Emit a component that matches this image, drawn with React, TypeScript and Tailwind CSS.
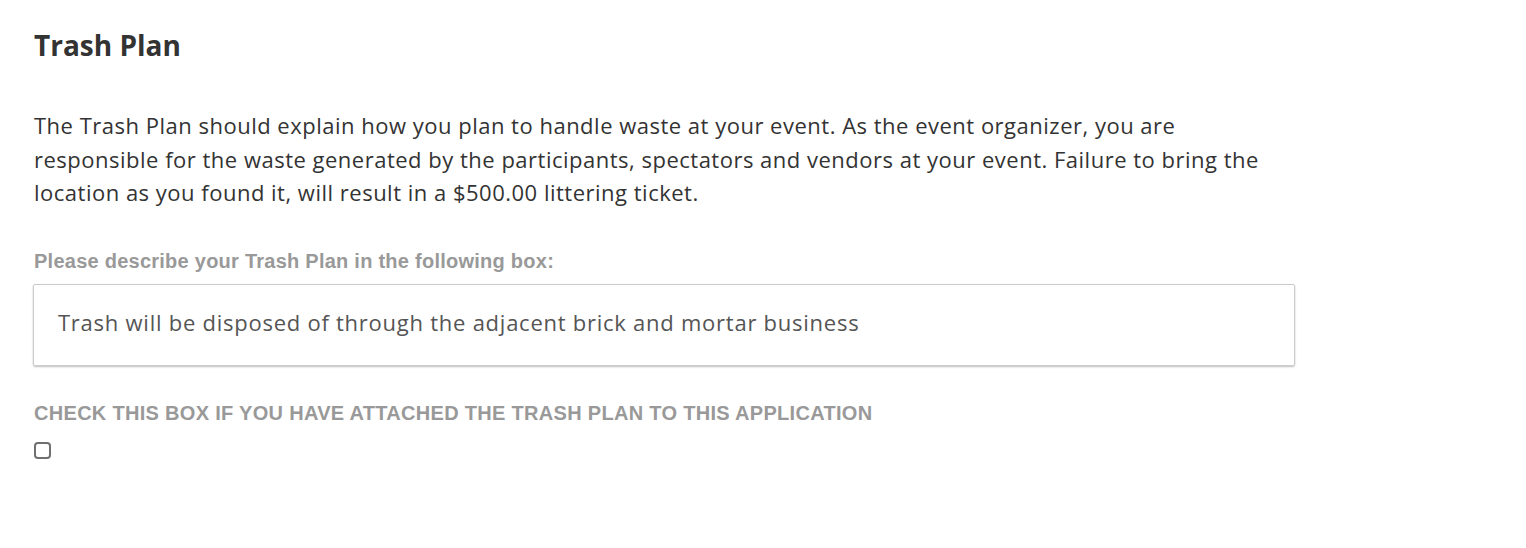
export default function App() {
  return (
    <div className="min-h-[548px] bg-white font-['Open_Sans','Liberation_Sans',sans-serif]">
      <div className="w-[1262px] ml-[33px] pt-[28px]">
        <h2 className="text-[28px] leading-[34px] font-bold text-[#333] pl-px">Trash Plan</h2>

        <p className="mt-[47px] text-[22px] leading-[33.5px] tracking-[0.5px] text-[#333] pl-px">
          The Trash Plan should explain how you plan to handle waste at your event. As the event organizer, you are
          <br />
          responsible for the waste generated by the participants, spectators and vendors at your event. Failure to bring the
          <br />
          location as you found it, will result in a $500.00 littering ticket.
        </p>

        <label className="block mt-[39px] font-['Liberation_Sans',Arial,sans-serif] text-[20px] leading-[24px] tracking-[0.25px] font-bold text-[#999] pl-px">
          Please describe your Trash Plan in the following box:
        </label>
        <div className="mt-[11px] h-[82px] border border-[#ccc] rounded-[2px] shadow-[0_1px_2px_rgba(0,0,0,0.25)] px-[24px] pt-[22px]">
          <span className="text-[22px] leading-[30px] tracking-[0.75px] text-[#555]">
            Trash will be disposed of through the adjacent brick and mortar business
          </span>
        </div>

        <label className="block mt-[35px] font-['Liberation_Sans',Arial,sans-serif] text-[20px] leading-[24px] tracking-[0.3px] font-bold text-[#999] pl-px">
          CHECK THIS BOX IF YOU HAVE ATTACHED THE TRASH PLAN TO THIS APPLICATION
        </label>
        <div className="mt-[17px] ml-[1px]">
          <input type="checkbox" className="appearance-none block w-[17px] h-[17px] border-2 border-[#707070] rounded-[4px] bg-white" />
        </div>
      </div>
    </div>
  );
}
